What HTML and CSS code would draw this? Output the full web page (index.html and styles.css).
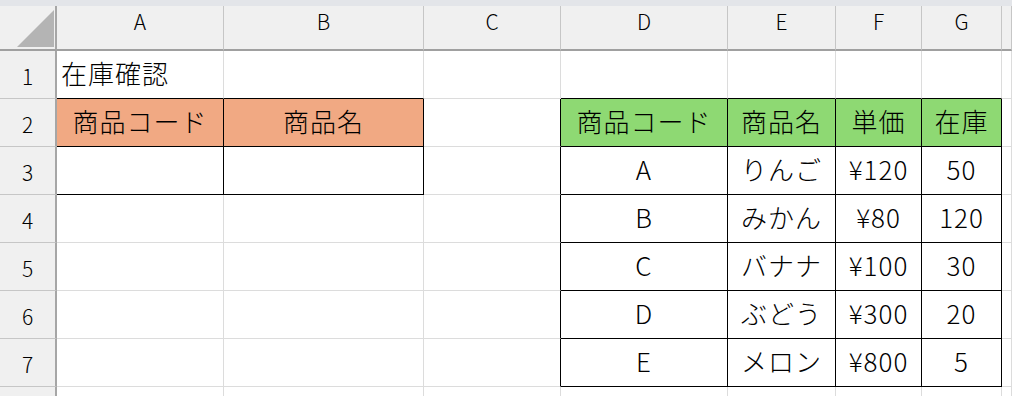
FILE: index.html
```html
<!DOCTYPE html>
<html lang="ja">
<head>
<meta charset="utf-8">
<title>在庫確認</title>
<link rel="stylesheet" href="styles.css">
</head>
<body>
<div class="topbar"></div>
<div class="sheet">
  <!-- column headers -->
  <div class="corner">
    <svg class="select-all" width="37" height="37" viewBox="0 0 37 37"><polygon points="37,0 37,37 0,37" fill="#b4b4b4"/></svg>
  </div>
  <div class="colhead">A</div>
  <div class="colhead">B</div>
  <div class="colhead">C</div>
  <div class="colhead">D</div>
  <div class="colhead">E</div>
  <div class="colhead">F</div>
  <div class="colhead">G</div>
  <div class="colhead"></div>

  <!-- row 1 -->
  <div class="rowhead">1</div>
  <div class="cell left b-bottom">在庫確認</div>
  <div class="cell b-bottom"></div>
  <div class="cell"></div>
  <div class="cell b-bottom"></div>
  <div class="cell b-bottom"></div>
  <div class="cell b-bottom"></div>
  <div class="cell b-bottom"></div>
  <div class="cell"></div>

  <!-- row 2 -->
  <div class="rowhead">2</div>
  <div class="cell boxed orange">商品コード</div>
  <div class="cell boxed orange">商品名</div>
  <div class="cell b-right"></div>
  <div class="cell boxed green">商品コード</div>
  <div class="cell boxed green">商品名</div>
  <div class="cell boxed green">単価</div>
  <div class="cell boxed green">在庫</div>
  <div class="cell"></div>

  <!-- row 3 -->
  <div class="rowhead">3</div>
  <div class="cell boxed"></div>
  <div class="cell boxed"></div>
  <div class="cell b-right"></div>
  <div class="cell boxed">A</div>
  <div class="cell boxed">りんご</div>
  <div class="cell boxed">¥120</div>
  <div class="cell boxed">50</div>
  <div class="cell"></div>

  <!-- row 4 -->
  <div class="rowhead">4</div>
  <div class="cell"></div>
  <div class="cell"></div>
  <div class="cell b-right"></div>
  <div class="cell boxed">B</div>
  <div class="cell boxed">みかん</div>
  <div class="cell boxed">¥80</div>
  <div class="cell boxed">120</div>
  <div class="cell"></div>

  <!-- row 5 -->
  <div class="rowhead">5</div>
  <div class="cell"></div>
  <div class="cell"></div>
  <div class="cell b-right"></div>
  <div class="cell boxed">C</div>
  <div class="cell boxed">バナナ</div>
  <div class="cell boxed">¥100</div>
  <div class="cell boxed">30</div>
  <div class="cell"></div>

  <!-- row 6 -->
  <div class="rowhead">6</div>
  <div class="cell"></div>
  <div class="cell"></div>
  <div class="cell b-right"></div>
  <div class="cell boxed">D</div>
  <div class="cell boxed">ぶどう</div>
  <div class="cell boxed">¥300</div>
  <div class="cell boxed">20</div>
  <div class="cell"></div>

  <!-- row 7 -->
  <div class="rowhead">7</div>
  <div class="cell"></div>
  <div class="cell"></div>
  <div class="cell b-right"></div>
  <div class="cell boxed">E</div>
  <div class="cell boxed">メロン</div>
  <div class="cell boxed">¥800</div>
  <div class="cell boxed">5</div>
  <div class="cell"></div>

  <!-- row 8, only its top edge fits in the window -->
  <div class="rowhead"></div>
  <div class="cell"></div>
  <div class="cell"></div>
  <div class="cell"></div>
  <div class="cell"></div>
  <div class="cell"></div>
  <div class="cell"></div>
  <div class="cell"></div>
  <div class="cell"></div>
</div>
</body>
</html>
```

FILE: styles.css
```css
html, body {
  margin: 0;
  padding: 0;
  background: #ffffff;
  overflow: hidden;
}

body {
  width: 1012px;
  height: 396px;
  font-family: "Noto Sans CJK JP", "Noto Sans", sans-serif;
  color: #000000;
}

.topbar {
  height: 6px;
  background: #e3e5e9;
}

.sheet {
  display: grid;
  grid-template-columns: 57px 167px 200px 137px 167px 108px 86px 80px 1fr;
  grid-template-rows: 45px repeat(7, 48px) 10px;
}

.sheet > div {
  box-sizing: border-box;
  display: flex;
  align-items: center;
  justify-content: center;
  overflow: hidden;
  white-space: nowrap;
}

.corner {
  background: #f0f0f0;
  border-right: 2px solid #a6a6a6;
  border-bottom: 2px solid #a0a0a0;
  position: relative;
}

.select-all {
  position: absolute;
  left: 17px;
  top: 4px;
}

/* letters sit near the top of the header strip */
.sheet > .colhead {
  align-items: flex-start;
  background: #f0f0f0;
  border-right: 1px solid #c6c6c6;
  border-bottom: 2px solid #a0a0a0;
  font-size: 21px;
  font-weight: 300;
}

.rowhead {
  background: #f0f0f0;
  border-right: 2px solid #a6a6a6;
  border-bottom: 1px solid #c6c6c6;
  font-size: 21px;
  font-weight: 300;
  padding-top: 3px;
}

.cell {
  border-right: 1px solid #dcdcdc;
  border-bottom: 1px solid #dcdcdc;
  font-size: 26px;
  font-weight: 300;
  letter-spacing: 1px;
  padding-bottom: 4px;
}

.cell.left {
  justify-content: flex-start;
  padding-left: 4px;
}

.cell.b-bottom {
  border-bottom-color: #000000;
}

.cell.b-right {
  border-right-color: #000000;
}

.cell.boxed {
  border-right-color: #000000;
  border-bottom-color: #000000;
}

.orange {
  background: #f1a983;
}

.green {
  background: #8ed973;
}
```
